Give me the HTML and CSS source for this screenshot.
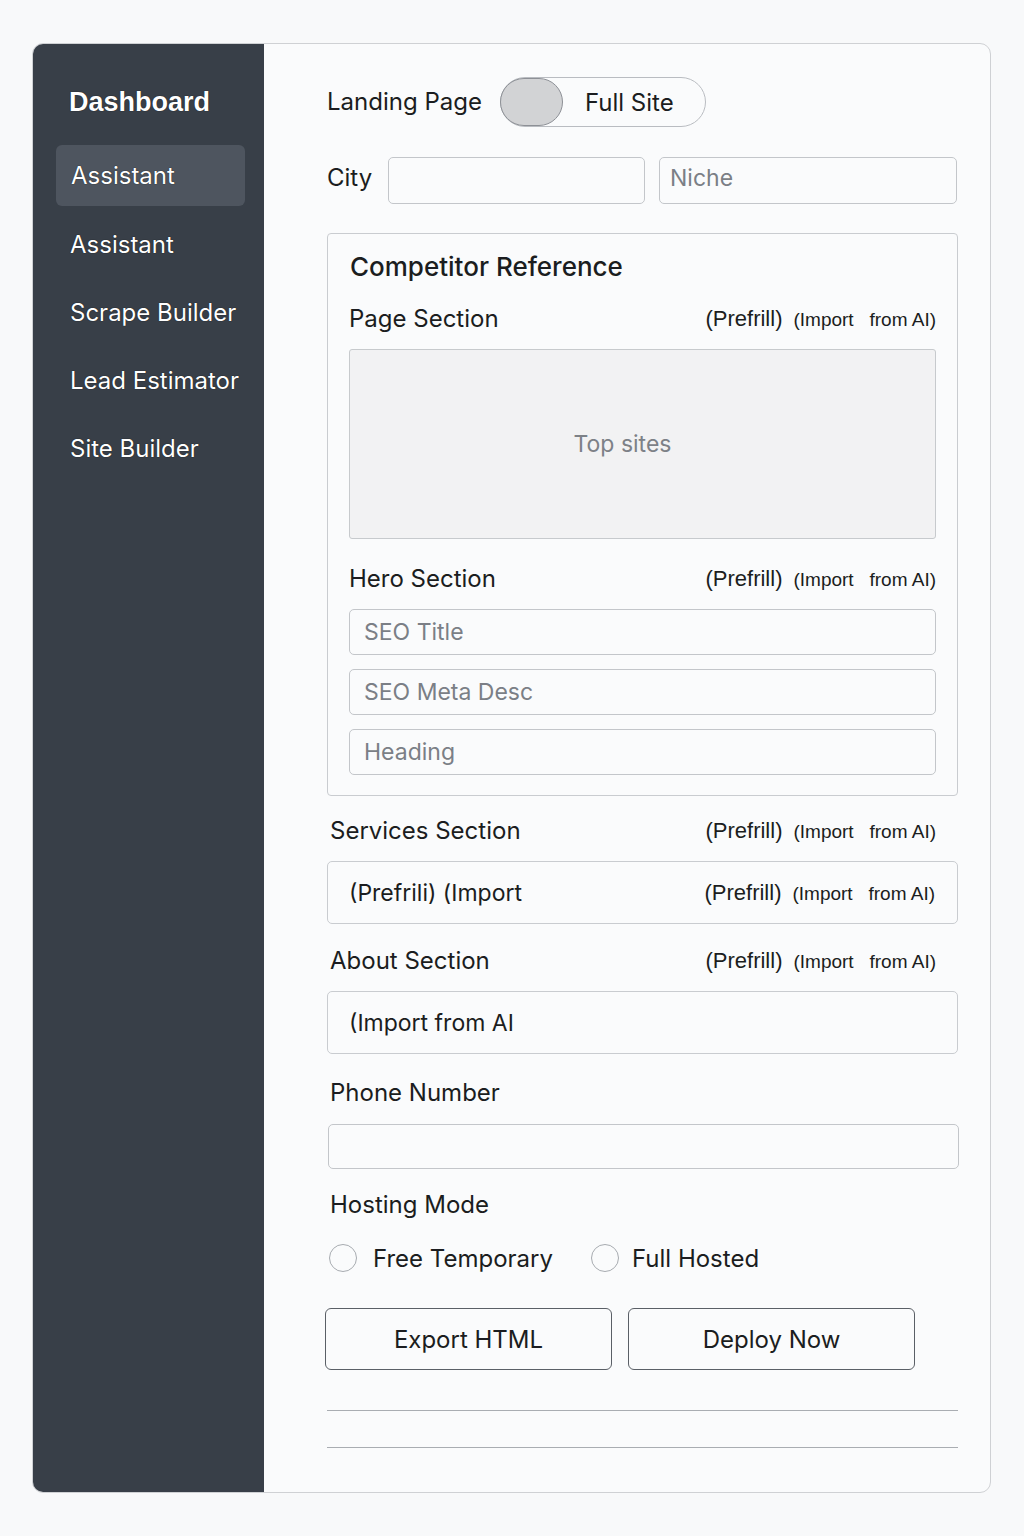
FILE: index.html
```html
<!DOCTYPE html>
<html>
<head>
<meta charset="utf-8">
<link rel="stylesheet" href="styles.css">
</head>
<body>
<div class="app">
  <aside class="sidebar">
    <div class="brand">Dashboard</div>
    <div class="nav-item active">Assistant</div>
    <div class="nav-item">Assistant</div>
    <div class="nav-item">Scrape Builder</div>
    <div class="nav-item">Lead Estimator</div>
    <div class="nav-item">Site Builder</div>
  </aside>
  <main class="main">
    <div class="mode-row">
      <span class="label-lg">Landing Page</span>
      <div class="toggle">
        <span class="knob"></span>
        <span class="toggle-text">Full Site</span>
      </div>
    </div>
    <div class="city-row">
      <span class="label-lg city-label">City</span>
      <div class="input city-input"></div>
      <div class="input niche-input"><span class="ph">Niche</span></div>
    </div>
    <section class="comp-box">
      <div class="comp-title">Competitor Reference</div>
      <div class="sec-head page-head">
        <span class="sec-label">Page Section</span>
        <span class="actions"><span class="pre">(Prefrill)</span><span class="imp">(Import&nbsp;&nbsp; from AI)</span></span>
      </div>
      <div class="top-sites">Top sites</div>
      <div class="sec-head hero-head">
        <span class="sec-label">Hero Section</span>
        <span class="actions"><span class="pre">(Prefrill)</span><span class="imp">(Import&nbsp;&nbsp; from AI)</span></span>
      </div>
      <div class="stack">
        <div class="input field"><span class="ph">SEO Title</span></div>
        <div class="input field"><span class="ph">SEO Meta Desc</span></div>
        <div class="input field"><span class="ph">Heading</span></div>
      </div>
    </section>
    <div class="sec-head outer-head services-head">
      <span class="sec-label">Services Section</span>
      <span class="actions"><span class="pre">(Prefrill)</span><span class="imp">(Import&nbsp;&nbsp; from AI)</span></span>
    </div>
    <div class="content-box">
      <span class="box-text">(Prefrili) (Import</span>
      <span class="actions"><span class="pre">(Prefrill)</span><span class="imp">(Import&nbsp;&nbsp; from AI)</span></span>
    </div>
    <div class="sec-head outer-head about-head">
      <span class="sec-label">About Section</span>
      <span class="actions"><span class="pre">(Prefrill)</span><span class="imp">(Import&nbsp;&nbsp; from AI)</span></span>
    </div>
    <div class="content-box">
      <span class="box-text">(Import from AI</span>
    </div>
    <div class="sec-label plain phone-label">Phone Number</div>
    <div class="input phone-input"></div>
    <div class="sec-label plain hosting-label">Hosting Mode</div>
    <div class="radio-row">
      <label class="radio"><span class="circle"></span>Free Temporary</label>
      <label class="radio"><span class="circle"></span>Full Hosted</label>
    </div>
    <div class="btn-row">
      <button class="btn">Export HTML</button>
      <button class="btn">Deploy Now</button>
    </div>
    <div class="rule rule1"></div>
    <div class="rule rule2"></div>
  </main>
</div>
</body>
</html>
```

FILE: styles.css
```css
* { box-sizing: border-box; }
html, body { margin: 0; padding: 0; }
body {
  background: #f8f9fa;
  font-family: Inter, "Liberation Sans", Arial, sans-serif;
  color: #1b1d20;
  width: 1024px;
  height: 1536px;
}
.app {
  margin: 43px 0 0 32px;
  width: 959px;
  height: 1450px;
  display: flex;
  border-radius: 11px;
  overflow: hidden;
  border: 1px solid #cfd1d4;
  background: #fafbfc;
}
.sidebar {
  width: 231px;
  flex: none;
  background: #383f48;
  padding: 40px 19px 0 23px;
  color: #fff;
}
.brand {
  font-family: "Liberation Sans", Arial, sans-serif;
  font-weight: 700;
  font-size: 27px;
  line-height: 36px;
  padding-left: 13px;
  height: 36px;
  margin-bottom: 25px;
  text-shadow: 0 0 1px #000;
}
.nav-item {
  font-size: 24px;
  line-height: 30px;
  padding-left: 14px;
  height: 30px;
  margin-bottom: 38px;
  text-shadow: 0 0 1px #000;
}
.nav-item.active {
  background: #4e555f;
  border-radius: 6px;
  height: 61px;
  line-height: 61px;
  padding-left: 15px;
  margin-bottom: 24px;
}
.main {
  flex: 1;
  padding: 33px 32px 0 63px;
}
.label-lg { font-size: 24px; line-height: 30px; }
.mode-row {
  display: flex;
  align-items: center;
  height: 50px;
  gap: 18px;
}
.toggle {
  width: 206px;
  height: 50px;
  border: 1px solid #b9bcc1;
  border-radius: 25px;
  display: flex;
  align-items: center;
  background: #fafbfc;
}
.knob {
  width: 63px;
  height: 48px;
  border-radius: 24px;
  background: #d2d3d5;
  border: 1px solid #8d9096;
  margin-left: -1px;
}
.toggle-text {
  font-size: 24px;
  margin-left: 22px;
}
.city-row {
  margin-top: 30px;
  display: flex;
  align-items: center;
  height: 47px;
}
.city-label { width: 61px; padding-bottom: 5px; }
.input {
  border: 1px solid #c3c6ca;
  border-radius: 5px;
  background: #fafbfc;
  display: flex;
  align-items: center;
}
.ph { color: #7b7f86; font-size: 23px; }
.city-input { width: 257px; height: 47px; }
.niche-input { width: 298px; height: 47px; margin-left: 14px; padding-left: 10px; padding-bottom: 6px; }
.comp-box {
  margin-top: 29px;
  width: 631px;
  border: 1px solid #c9ccd0;
  border-radius: 4px;
  padding: 17px 21px 20px 21px;
}
.comp-title {
  font-size: 26px;
  font-weight: 500;
  line-height: 32px;
  padding-left: 1px;
}
.sec-head {
  display: flex;
  justify-content: space-between;
  align-items: center;
  height: 30px;
}
.comp-box .page-head { margin-top: 21px; }
.sec-label { font-size: 24px; line-height: 30px; }
.actions {
  display: flex;
  align-items: baseline;
  gap: 11px;
  font-family: "Liberation Sans", Arial, sans-serif;
}
.pre { font-size: 22px; }
.imp { font-size: 19px; }
.top-sites {
  margin-top: 15px;
  height: 190px;
  background: #f2f2f3;
  border: 1px solid #c7cacd;
  border-radius: 3px;
  display: flex;
  align-items: center;
  justify-content: center;
  padding-right: 40px;
  color: #7d8187;
  font-size: 23px;
}
.comp-box .hero-head { margin-top: 25px; }
.stack {
  margin-top: 15px;
  display: flex;
  flex-direction: column;
  gap: 14px;
}
.field { height: 46px; padding-left: 14px; }
.outer-head { width: 631px; padding-left: 3px; padding-right: 22px; }
.services-head { margin-top: 20px; }
.about-head { margin-top: 22px; }
.content-box {
  margin-top: 15px;
  width: 631px;
  height: 63px;
  border: 1px solid #c9ccd0;
  border-radius: 5px;
  display: flex;
  justify-content: space-between;
  align-items: center;
  padding: 0 22px 0 21px;
}
.box-text { font-size: 23px; }
.plain { display: block; padding-left: 3px; }
.phone-label { margin-top: 24px; }
.phone-input { margin-top: 16px; width: 631px; height: 45px; margin-left: 1px; }
.hosting-label { margin-top: 21px; }
.radio-row {
  margin-top: 24px;
  display: flex;
  align-items: center;
  height: 28px;
  padding-left: 2px;
  gap: 38px;
}
.radio {
  display: flex;
  align-items: center;
  font-size: 24px;
  gap: 16px;
}
.radio + .radio { gap: 13px; }
.circle {
  width: 28px;
  height: 28px;
  border-radius: 50%;
  border: 1px solid #a7abb0;
  background: #fafbfc;
}
.btn-row {
  margin-top: 36px;
  display: flex;
  gap: 16px;
  margin-left: -2px;
}
.btn {
  width: 287px;
  height: 62px;
  border: 1px solid #5a5f66;
  border-radius: 6px;
  background: #fafbfc;
  font-family: Inter, "Liberation Sans", Arial, sans-serif;
  font-size: 24px;
  color: #1b1d20;
}
.rule {
  width: 631px;
  height: 1px;
  background: #a9adb2;
}
.rule1 { margin-top: 40px; }
.rule2 { margin-top: 36px; }
```
